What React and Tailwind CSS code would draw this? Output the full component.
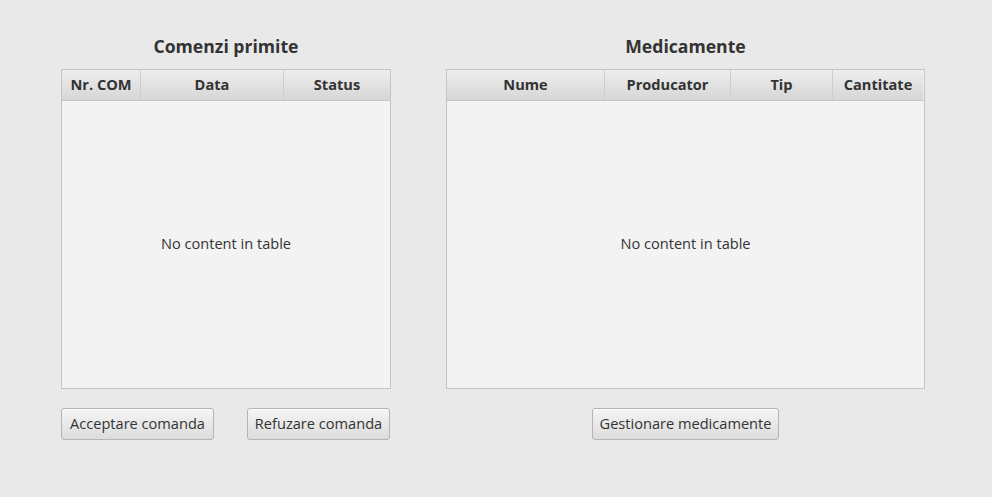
import React from "react";

const font = { fontFamily: '"Open Sans", "Noto Sans", sans-serif' };

function HeaderCell({ label, className }) {
  return (
    <div className={`h-full flex items-center justify-center pb-[1px] text-[14.6px] font-bold text-[#333333] ${className}`}>
      {label}
    </div>
  );
}

function Btn({ label, className }) {
  return (
    <button
      className={`h-[32px] rounded-[3px] border border-[#b4b4b4] bg-gradient-to-b from-[#f5f5f5] to-[#dcdcdc] text-[14.6px] text-[#333333] shadow-[inset_0_1px_0_#fbfbfb] ${className}`}
    >
      {label}
    </button>
  );
}

function Table({ cols, width }) {
  return (
    <div className={`${width} h-[320px] border border-[#c4c4c4] bg-[#f3f3f3] flex flex-col`}>
      <div className="h-[31px] flex border-b border-[#c8c8c8] bg-gradient-to-b from-[#eeeeee] to-[#d6d6d6]">
        {cols.map((c, i) => (
          <HeaderCell key={i} label={c.label} className={c.className} />
        ))}
      </div>
      <div className="flex-1 flex items-center justify-center pb-[2px] text-[14.6px] text-[#333333]">
        No content in table
      </div>
    </div>
  );
}

export default function App() {
  return (
    <div className="w-[992px] h-[497px] bg-[#e9e9e9] flex gap-[55px] pl-[61px] pt-[34px]" style={font}>
      <div className="w-[330px] flex flex-col">
        <div className="h-[24px] leading-[24px] text-center text-[17.6px] font-bold text-[#333333] mb-[11px]">
          Comenzi primite
        </div>
        <Table
          width="w-[330px]"
          cols={[
            { label: "Nr. COM", className: "w-[79px] border-r border-[#cdcdcd]" },
            { label: "Data", className: "w-[143px] border-r border-[#cdcdcd]" },
            { label: "Status", className: "flex-1" },
          ]}
        />
        <div className="mt-[19px] flex justify-between pr-[1px]">
          <Btn label="Acceptare comanda" className="w-[153px]" />
          <Btn label="Refuzare comanda" className="w-[143px]" />
        </div>
      </div>
      <div className="w-[479px] flex flex-col">
        <div className="h-[24px] leading-[24px] text-center text-[17.6px] font-bold text-[#333333] mb-[11px]">
          Medicamente
        </div>
        <Table
          width="w-[479px]"
          cols={[
            { label: "Nume", className: "w-[158px] border-r border-[#cdcdcd]" },
            { label: "Producator", className: "w-[126px] border-r border-[#cdcdcd]" },
            { label: "Tip", className: "w-[102px] border-r border-[#cdcdcd]" },
            { label: "Cantitate", className: "w-[90px]" },
            { label: "", className: "flex-1 bg-[#f0f0f0]" },
          ]}
        />
        <div className="mt-[19px] flex justify-center">
          <Btn label="Gestionare medicamente" className="w-[187px]" />
        </div>
      </div>
    </div>
  );
}
